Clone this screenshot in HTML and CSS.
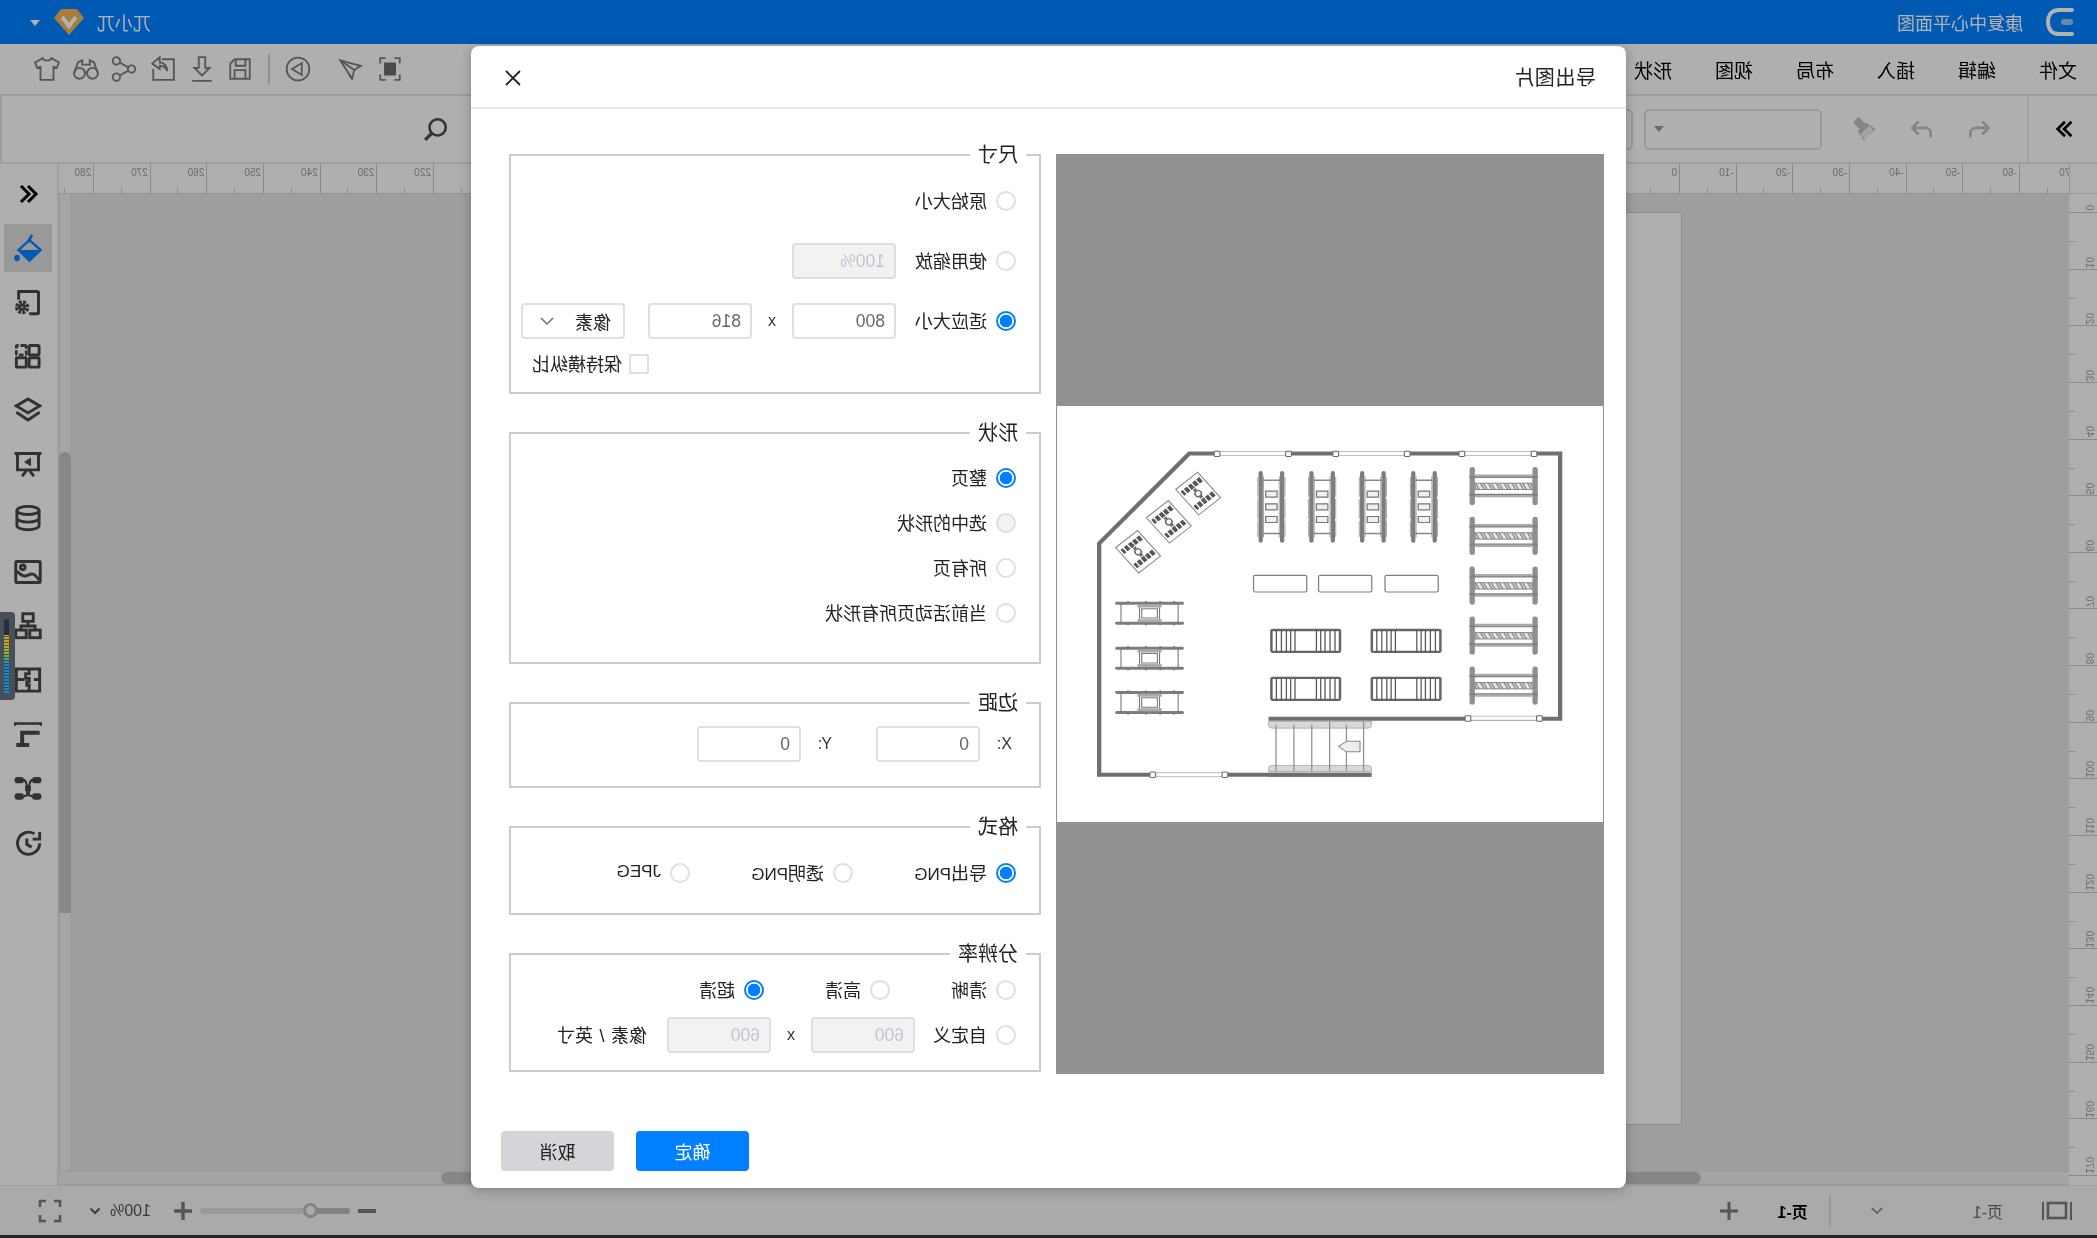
FILE: index.html
```html
<!DOCTYPE html>
<html lang="zh-CN">
<head>
<meta charset="utf-8">
<title>导出图片</title>
<link rel="stylesheet" href="styles.css">
</head>
<body>
<div class="app">
  <header class="topbar">
    <svg class="logo" viewBox="0 0 32 32"><path d="M5 4H18C27 4 29 11 29 16S27 28 18 28H5" fill="none" stroke="#fff" stroke-width="4" stroke-linecap="round"/><rect x="4" y="13" width="12" height="6" rx="3" fill="#9cc4ee"/></svg>
    <span class="doc-title">康复中心平面图</span>
    <span class="user">兀小兀</span>
    <svg class="badge" viewBox="0 0 30 28"><path d="M7 1H23L30 10 15 27 0 10Z" fill="#efb452"/><path d="M8 9L15 18 22 9" fill="none" stroke="#fff" stroke-width="4"/></svg>
    <span class="user-caret"></span>
  </header>

  <nav class="menubar">
    <span class="menu">文件</span><span class="menu">编辑</span><span class="menu">插入</span><span class="menu">布局</span><span class="menu">视图</span><span class="menu">形状</span>
    <div class="tools">
      <svg class="ti" viewBox="0 0 24 24"><path d="M3 7V2h5M16 2h5v5M21 17v5h-5M8 22H3v-5"/><rect class="solid" x="6.500" y="6" width="11" height="12"/></svg>
      <svg class="ti" viewBox="0 0 24 24"><path d="M22 4L3 9l6 4 2 8z"/><path d="M22 4L9 13M11 21l3-4"/></svg>
      <svg class="ti ti-play" viewBox="0 0 24 24"><circle cx="12" cy="12" r="10.500"/><path d="M8.500 6.500v11l9-5.500z"/></svg>
      <span class="tool-div"></span>
      <svg class="ti ti-save" viewBox="0 0 24 24"><path d="M3 3h14l4 4v14H3z"/><path d="M7 3v6h9V3M7 21v-8h10v8"/></svg>
      <svg class="ti" viewBox="0 0 24 24"><path d="M9 1h6v10h4l-7 7-7-7h4zM3 23h18"/></svg>
      <svg class="ti" viewBox="0 0 24 24"><path d="M13 3H2v19h19V12"/><path d="M15 1l7 6-7 5V9c-4 0-6 2-7 5 0-5 3-8 7-8z"/></svg>
      <svg class="ti" viewBox="0 0 24 24"><circle cx="5" cy="12" r="3.400"/><circle cx="19" cy="4.500" r="3.400"/><circle cx="19" cy="19.500" r="3.400"/><path d="M8 10.500l8-4.500M8 13.500l8 4.500"/></svg>
      <svg class="ti" viewBox="0 0 24 24"><circle cx="6" cy="16" r="5"/><circle cx="18" cy="16" r="5"/><path d="M10.500 15h3M1.500 15l3-9 4-2v5M22.500 15l-3-9-4-2v5M9 8h6"/></svg>
      <svg class="ti" viewBox="0 0 24 24"><path d="M8 2L1 6l2 5 3-1v12h12V10l3 1 2-5-7-4c-1 3-7 3-8 0z"/></svg>
    </div>
  </nav>

  <div class="toolbar">
    <div class="collapse"><svg class="ci" viewBox="0 0 24 24"><path d="M5 4l8 8-8 8M12 4l8 8-8 8"/></svg></div>
    <svg class="ti ti-undo" viewBox="0 0 24 24"><path d="M9 5L3 11l6 6M3 11h12c3 0 5 2 5 5v4"/></svg>
    <svg class="ti ti-redo" viewBox="0 0 24 24"><path d="M15 5l6 6-6 6M21 11H9c-3 0-5 2-5 5v4"/></svg>
    <svg class="ti ti-brush" viewBox="0 0 24 24"><path class="fillg" d="M17 1l5 5-5 5-1 1-5-5 1-1z"/><path class="fillg" d="M10 6l8 8-6 8.500L1.500 12z"/><path d="M7 10l7 7-3 3.500-6.500-7z" stroke="#f0f0f0" stroke-width="1.500" fill="#e6e6e6"/></svg>
    <div class="combo combo-a"><span class="caret"></span></div>
    <div class="combo combo-b"></div>
    <svg class="ti ti-search" viewBox="0 0 24 24"><circle cx="10.500" cy="10.500" r="7.500"/><path d="M16 16l6 6" stroke-width="3"/></svg>
  </div>

  <div class="work">
    <div class="stage">
      <div class="hruler">
        <div class="corner"></div>
        <div class="hticks">
          <span class="ht">-70</span><span class="ht">-60</span><span class="ht">-50</span><span class="ht">-40</span><span class="ht">-30</span><span class="ht">-20</span><span class="ht">-10</span><span class="ht">0</span><span class="ht">10</span><span class="ht">20</span><span class="ht">30</span><span class="ht">40</span><span class="ht">50</span><span class="ht">60</span><span class="ht">70</span><span class="ht">80</span><span class="ht">90</span><span class="ht">100</span><span class="ht">110</span><span class="ht">120</span><span class="ht">130</span><span class="ht">140</span><span class="ht">150</span><span class="ht">160</span><span class="ht">170</span><span class="ht">180</span><span class="ht">190</span><span class="ht">200</span><span class="ht">210</span><span class="ht">220</span><span class="ht">230</span><span class="ht">240</span><span class="ht">250</span><span class="ht">260</span><span class="ht">270</span><span class="ht">280</span>
        </div>
      </div>
      <div class="mid">
        <div class="vruler">
          <span class="vt"><b>0</b></span><span class="vt"><b>10</b></span><span class="vt"><b>20</b></span><span class="vt"><b>30</b></span><span class="vt"><b>40</b></span><span class="vt"><b>50</b></span><span class="vt"><b>60</b></span><span class="vt"><b>70</b></span><span class="vt"><b>80</b></span><span class="vt"><b>90</b></span><span class="vt"><b>100</b></span><span class="vt"><b>110</b></span><span class="vt"><b>120</b></span><span class="vt"><b>130</b></span><span class="vt"><b>140</b></span><span class="vt"><b>150</b></span><span class="vt"><b>160</b></span><span class="vt"><b>170</b></span>
        </div>
        <div class="canvas"><div class="paper"></div></div>
        <div class="vscroll"><div class="vthumb"></div></div>
      </div>
      <div class="hscroll"><div class="hthumb"></div></div>
    </div>
    <aside class="sidebar">
      <div class="si"><svg class="ci" viewBox="0 0 24 24"><path d="M19 4l-8 8 8 8M12 4l-8 8 8 8"/></svg></div>
      <div class="si si-on"><svg class="bucket" viewBox="0 0 28 28"><path d="M10 1l4 7" stroke-width="2.600"/><path d="M1.500 16L12.500 6l11 10-11 10.500z" stroke-width="2.400"/><path class="bfill" d="M1.500 16h22l-11 11z"/><ellipse class="bfill" cx="25" cy="24" rx="2.800" ry="3.200"/></svg></div>
      <div class="si"><svg viewBox="0 0 24 24"><path d="M20 10V3H4a1 1 0 0 0-1 1v17a1 1 0 0 0 1 1h7"/><circle cx="17" cy="16.500" r="2"/><circle cx="17" cy="16.500" r="4.500" stroke-dasharray="2.400 1.100" stroke-width="3.200"/></svg></div>
      <div class="si"><svg viewBox="0 0 24 24"><rect x="2.500" y="3" width="8.500" height="8" rx="1"/><rect x="13.500" y="3" width="8.500" height="8" rx="1" stroke-dasharray="4 1.500"/><rect x="2.500" y="13.500" width="8.500" height="8" rx="1"/><rect x="13.500" y="13.500" width="8.500" height="8" rx="1"/></svg></div>
      <div class="si"><svg viewBox="0 0 24 24"><path d="M12 2.500l10 6-10 6-10-6z"/><path d="M2 14l10 6.500L22 14"/></svg></div>
      <div class="si"><svg viewBox="0 0 24 24"><path d="M0.500 3h23M3 3v14h18V3M7 22.500l4-5.500M17 22.500l-4-5.500"/><path class="fill" d="M9.500 6.500v7.500l6-3.750z"/></svg></div>
      <div class="si"><svg viewBox="0 0 24 24"><ellipse cx="12" cy="5.500" rx="9.500" ry="3.500"/><path d="M2.500 5.500v13c0 2 4 3.500 9.500 3.500s9.500-1.500 9.500-3.500v-13M2.500 12c0 2 4 3.500 9.500 3.500s9.500-1.500 9.500-3.500"/></svg></div>
      <div class="si"><svg viewBox="0 0 24 24"><rect x="1.500" y="3" width="21" height="18" rx="1"/><circle cx="16.500" cy="8" r="2"/><path d="M2.500 19c4-6 6-6 9-4.500s5 1.500 10-3"/></svg></div>
      <div class="si"><svg viewBox="0 0 24 24"><rect x="7.500" y="1.500" width="9" height="6.500"/><rect x="1.500" y="15.500" width="9" height="6.500"/><rect x="13.500" y="15.500" width="9" height="6.500"/><path d="M12 8v4M6 15.500V12h12v3.500"/></svg></div>
      <div class="si"><svg viewBox="0 0 24 24"><path d="M2 2.500h20v19H2z"/><path d="M2 11.500h5M15 11.500h7M11 2.500v4h3v4h-3v3h2v3h-2v5"/></svg></div>
      <div class="si"><svg viewBox="0 0 24 24"><path d="M1 5V3h22v2" stroke-width="2"/><path d="M2 11H17V21M11 21.500H22" stroke-width="3.400"/></svg></div>
      <div class="si"><svg viewBox="0 0 24 24"><rect class="fill" x="0.500" y="2.500" width="8" height="5.500" rx="2.500"/><rect class="fill" x="15.500" y="2.500" width="8" height="5.500" rx="2.500"/><rect class="fill" x="0.500" y="16.500" width="8" height="5.500" rx="2.500"/><rect class="fill" x="15.500" y="16.500" width="8" height="5.500" rx="2.500"/><path d="M8 5c3 0 2 4 4 7s1 7-4 7M16 5c-3 0-2 4-4 7s-1 7 4 7" stroke-width="1.800"/><rect class="fill" x="9.500" y="10" width="5" height="4.500"/></svg></div>
      <div class="si"><svg viewBox="0 0 24 24"><path d="M6.500 5a9.500 9.500 0 1 1-4.500 8"/><path d="M2 3.500v6h6"/><path d="M13 9v5l-4 2.500"/></svg></div>
    </aside>
  </div>

  <footer class="status">
    <svg class="st st-view" viewBox="0 0 32 20"><path d="M2 1v18M30 1v18"/><rect x="7" y="2" width="18" height="15" stroke-width="2.600"/></svg>
    <span class="page-name">页-1</span>
    <svg class="st st-chev" viewBox="0 0 16 10"><path d="M2 2l6 6 6-6"/></svg>
    <span class="st-div"></span>
    <span class="page-tab">页-1</span>
    <svg class="st st-plus" viewBox="0 0 18 18"><path d="M9 0v18M0 9h18"/></svg>
    <svg class="st st-minus" viewBox="0 0 18 4"><path d="M0 2h18"/></svg>
    <div class="slider"><span class="slider-fill"></span><span class="slider-knob"></span></div>
    <svg class="st st-plus2" viewBox="0 0 18 18"><path d="M9 0v18M0 9h18"/></svg>
    <span class="zoom-val">100%</span>
    <svg class="st st-chev2" viewBox="0 0 12 8"><path d="M1.500 1.500l4.500 4.500 4.500-4.500"/></svg>
    <svg class="st st-full" viewBox="0 0 24 24"><path d="M2 8V2h6M16 2h6v6M22 16v6h-6M8 22H2v-6"/></svg>
  </footer>
  <div class="bottom-edge"></div>

  <div class="mask"></div>
  <div class="meter"><div class="meter-bars"></div></div>

  <section class="modal">
    <div class="modal-head">
      <h2 class="modal-title">导出图片</h2>
      <svg class="close" viewBox="0 0 16 16"><path d="M1 1l14 14M15 1L1 15"/></svg>
    </div>
    <div class="modal-body">
      <div class="preview">
        <svg class="plan" viewBox="20 17 1528 1250" preserveAspectRatio="none">
          <defs>
            <pattern id="hatch" width="22" height="18" patternUnits="userSpaceOnUse" patternTransform="skewX(30)"><rect width="22" height="18" fill="#e8e8e8"/><path d="M6 0v18M14 0v18" stroke="#555" stroke-width="3"/></pattern>
            <g id="rackA">
              <path d="M-30 -102V102M30 -102V102" stroke="#7d7d7d" stroke-width="12" stroke-linecap="round"/>
              <path d="M-38 -90V90M38 -90V90" stroke="#aaa" stroke-width="3" stroke-dasharray="60 6"/>
              <path d="M-22 -92V92M22 -92V92" stroke="#999" stroke-width="2.500"/>
              <path d="M-30 -80H30M-30 80H30" stroke="#888" stroke-width="4"/>
              <path d="M-16 -47H16V-29H-16ZM-16 -9H16V9H-16ZM-16 29H16V47H-16Z" fill="#f0f0f0" stroke="#777" stroke-width="3.500"/>
            </g>
            <g id="rackB">
              <path d="M-88 -50V50M88 -50V50" stroke="#8f8f8f" stroke-width="15" stroke-linecap="round"/>
              <path d="M-96 -28H96M-96 26H96" stroke="#808080" stroke-width="6"/>
              <path d="M-80 -32H80M-80 30H80" stroke="#aaa" stroke-width="7"/>
              <rect x="-80" y="-9" width="162" height="19" fill="url(#hatch)" stroke="#888" stroke-width="3"/>
            </g>
            <g id="rackC">
              <rect x="-96" y="-33" width="192" height="66" rx="4" fill="#fff" stroke="#666" stroke-width="7"/>
              <path d="M-82 -33V33M-68 -33V33M-54 -33V33M-42 -33V33M-30 -33V33M30 -33V33M42 -33V33M54 -33V33M68 -33V33M82 -33V33" stroke="#555" stroke-width="3.500"/>
            </g>
            <g id="rackD">
              <path d="M-92 -30H92M-92 30H92" stroke="#7d7d7d" stroke-width="9" stroke-linecap="round"/>
              <path d="M-80 -30V30M-28 -30V30M28 -30V30M80 -30V30" stroke="#777" stroke-width="3"/>
              <path d="M-22 -14H22V14H-22Z" fill="#fff" stroke="#777" stroke-width="3"/>
              <path d="M-34 -22H34M-34 22H34" stroke="#aaa" stroke-width="9"/>
              <path d="M-60 -30V-36M-10 -30V-36M30 -30V-36M68 -30V-36M-60 30V36M-10 30V36M30 30V36M68 30V36" stroke="#777" stroke-width="6"/>
            </g>
            <g id="rackE">
              <rect x="-50" y="-40" width="100" height="80" fill="#fff" stroke="#888" stroke-width="3"/>
              <path d="M-28 -34V34M28 -34V34" stroke="#555" stroke-width="16" stroke-dasharray="11 4"/>
              <path d="M-26 0H26" stroke="#666" stroke-width="10" stroke-dasharray="6 3"/>
              <circle r="9" fill="#fff" stroke="#666" stroke-width="4"/>
            </g>
          </defs>
          <rect x="20" y="17" width="1528" height="1250" fill="#fff"/>
          <path d="M900 1125H138V430L390 160H1428V957H612" fill="none" stroke="#6f6f6f" stroke-width="12"/>
          <g fill="#fff" stroke="#bbb" stroke-width="2.500">
            <rect x="468" y="154" width="200" height="12"/><rect x="800" y="154" width="200" height="12"/><rect x="1153" y="154" width="202" height="12"/><rect x="1170" y="949" width="200" height="12"/><rect x="288" y="1119" width="202" height="12"/>
          </g>
          <g fill="#fff" stroke="#666" stroke-width="3">
            <rect x="460" y="153" width="16" height="16" rx="3"/><rect x="660" y="153" width="16" height="16" rx="3"/><rect x="792" y="153" width="16" height="16" rx="3"/><rect x="992" y="153" width="16" height="16" rx="3"/><rect x="1145" y="153" width="16" height="16" rx="3"/><rect x="1347" y="153" width="16" height="16" rx="3"/><rect x="1162" y="948" width="16" height="16" rx="3"/><rect x="1362" y="948" width="16" height="16" rx="3"/><rect x="280" y="1117" width="16" height="16" rx="3"/><rect x="482" y="1117" width="16" height="16" rx="3"/>
          </g>
          <use href="#rackA" x="620" y="320"/><use href="#rackA" x="762" y="320"/><use href="#rackA" x="904" y="320"/><use href="#rackA" x="1047" y="320"/>
          <use href="#rackB" x="1270" y="258"/><use href="#rackB" x="1270" y="407"/><use href="#rackB" x="1270" y="557"/><use href="#rackB" x="1270" y="707"/><use href="#rackB" x="1270" y="857"/>
          <g fill="#fff" stroke="#7f7f7f" stroke-width="3.500"><rect x="570" y="526" width="149" height="50" rx="5"/><rect x="752" y="526" width="149" height="50" rx="5"/><rect x="938" y="526" width="149" height="50" rx="5"/></g>
          <use href="#rackC" x="716" y="723"/><use href="#rackC" x="997" y="723"/><use href="#rackC" x="716" y="867"/><use href="#rackC" x="997" y="867"/>
          <use href="#rackD" x="279" y="640"/><use href="#rackD" x="279" y="775"/><use href="#rackD" x="279" y="908"/>
          <g transform="translate(415 280) rotate(50)"><use href="#rackE"/></g><g transform="translate(333 365) rotate(50)"><use href="#rackE"/></g><g transform="translate(247 455) rotate(50)"><use href="#rackE"/></g>
          <path d="M612 965H900V975Q900 985 890 985H622Q612 985 612 975ZM612 1115H900V1107Q900 1097 890 1097H622Q612 1097 612 1107Z" fill="#d8d8d8" stroke="#999" stroke-width="2"/>
          <path d="M633 975V1115M683 975V1115M733 975V1115M783 965V1115M830 975V1115M878 965V1115" stroke="#8f8f8f" stroke-width="3.500"/>
          <path d="M808 1040L830 1024H868V1056H830Z" fill="#eee" stroke="#888" stroke-width="3"/>
          <path d="M612 1125H900" stroke="#6f6f6f" stroke-width="12"/>
        </svg>
      </div>
      <form class="form">
        <fieldset class="fs fs-size">
          <legend>尺寸</legend>
          <div class="rows rows-size">
            <div class="row r60"><span class="radio"></span><span class="lbl">原始大小</span></div>
            <div class="row r60"><span class="radio"></span><span class="lbl lbl-gap">使用缩放</span><span class="inp off">100%</span></div>
            <div class="row r60"><span class="radio on"></span><span class="lbl lbl-gap">适应大小</span><span class="inp">800</span><span class="sep">x</span><span class="inp">816</span><span class="sel"><span>像素</span><svg class="chev" viewBox="0 0 14 8"><path d="M1 1l6 6 6-6"/></svg></span></div>
            <div class="row rcheck"><span class="check"></span><span class="check-lbl">保持横纵比</span></div>
          </div>
        </fieldset>
        <fieldset class="fs fs-shape">
          <legend>形状</legend>
          <div class="rows rows-shape">
            <div class="row r45"><span class="radio on"></span><span class="lbl">整页</span></div>
            <div class="row r45"><span class="radio dis"></span><span class="lbl">选中的形状</span></div>
            <div class="row r45"><span class="radio"></span><span class="lbl">所有页</span></div>
            <div class="row r45"><span class="radio"></span><span class="lbl">当前活动页所有形状</span></div>
          </div>
        </fieldset>
        <fieldset class="fs fs-margin">
          <legend>边距</legend>
          <div class="rows rows-margin">
            <div class="row r36"><span class="axis axis-x">X:</span><span class="inp">0</span><span class="axis axis-y">Y:</span><span class="inp">0</span></div>
          </div>
        </fieldset>
        <fieldset class="fs fs-format">
          <legend>格式</legend>
          <div class="rows rows-format">
            <div class="row r36">
              <span class="opt opt-f"><span class="radio on"></span><span class="lbl">导出<span class="lat">PNG</span></span></span>
              <span class="opt opt-f"><span class="radio"></span><span class="lbl">透明<span class="lat">PNG</span></span></span>
              <span class="opt opt-f"><span class="radio"></span><span class="lbl lat">JPEG</span></span>
            </div>
          </div>
        </fieldset>
        <fieldset class="fs fs-res">
          <legend>分辨率</legend>
          <div class="rows rows-res">
            <div class="row r45">
              <span class="opt opt-r"><span class="radio"></span><span class="lbl">清晰</span></span>
              <span class="opt opt-r"><span class="radio"></span><span class="lbl">高清</span></span>
              <span class="opt opt-r"><span class="radio on"></span><span class="lbl">超清</span></span>
            </div>
            <div class="row r45"><span class="radio"></span><span class="lbl lbl-72">自定义</span><span class="inp off">600</span><span class="sep">x</span><span class="inp off">600</span><span class="unit">像素 / 英寸</span></div>
          </div>
        </fieldset>
      </form>
    </div>
    <div class="modal-foot">
      <button class="btn btn-ok" type="button">确定</button>
      <button class="btn btn-no" type="button">取消</button>
    </div>
  </section>
</div>
</body>
</html>
```
FILE: styles.css
```css
* { box-sizing: border-box; }
html, body { margin: 0; padding: 0; height: 100%; overflow: hidden; background: #000; }
body { font-family: "Liberation Sans", "Noto Sans CJK SC", sans-serif; }

/* The whole screen is a mirror image of the product UI */
.app {
  position: relative;
  width: 2097px;
  height: 1238px;
  display: flex;
  flex-direction: column;
  overflow: hidden;
  background: #fbfbfb;
  color: #000;
  transform: scaleX(-1);
}

.topbar {
  flex: 0 0 44px;
  display: flex;
  align-items: center;
  background: #0080ff;
  color: #fff;
  font-size: 18px;
  padding-left: 20px;
}
.logo { width: 32px; height: 32px; flex: none; }
.doc-title { margin-left: 22px; }
.user { margin-left: auto; }
.badge { width: 30px; height: 28px; margin-left: 13px; flex: none; }
.user-caret { margin: 2px 30px 0 14px; border: 5px solid transparent; border-top: 6px solid #fff; border-bottom: 0; width: 0; }

.menubar {
  flex: 0 0 52px;
  display: flex;
  align-items: center;
  border-bottom: 2px solid #e2e2e2;
  padding-left: 20px;
  font-size: 19px;
}
.menu { width: 38px; margin-right: 43px; white-space: nowrap; }
.tools { margin-left: auto; display: flex; align-items: center; padding-right: 28px; }
.ti { width: 26px; height: 26px; flex: none; fill: none; stroke: #7c7c7c; stroke-width: 1.700; margin: 0 6.300px; }
.ti .solid { fill: #6a6a6a; stroke: none; }
.ti-play { margin-left: 20.700px; margin-right: 5px; }
.ti-save { margin-left: 5px; }
.tool-div { width: 2px; height: 30px; background: #cfcfcf; margin: 0 10px; }

.toolbar {
  flex: 0 0 68px;
  display: flex;
  align-items: center;
  border-bottom: 2px solid #e2e2e2;
  border-right: 2px solid #e2e2e2;
}
.collapse { width: 70px; height: 100%; display: flex; align-items: center; justify-content: center; border-right: 2px solid #e8e8e8; padding-right: 4px; }
.ci { width: 22px; height: 22px; fill: none; stroke: #000; stroke-width: 3; }
.ti-undo, .ti-redo, .ti-brush { stroke: #bdbdbd; stroke-width: 2.400; }
.ti-undo { margin-left: 35px; }
.ti-redo { margin-left: 24.700px; }
.ti-brush { margin-left: 25.700px; }
.fillg { fill: #bdbdbd; stroke: none; }
.combo { height: 41px; border: 2px solid #dcdcdc; border-radius: 5px; display: flex; align-items: center; justify-content: flex-end; flex: none; }
.combo-a { width: 178px; margin-left: 22.700px; padding-right: 8px; }
.combo-b { width: 240px; margin-left: 11px; }
.caret { border: 5px solid transparent; border-top: 6px solid #999; border-bottom: 0; width: 0; }
.ti-search { margin-left: auto; margin-right: 421px; stroke: #4a4a4a; stroke-width: 2.400; }

.work { flex: 1; display: flex; min-height: 0; }
.stage { flex: 1; display: flex; flex-direction: column; min-width: 0; }

.hruler { flex: 0 0 29px; display: flex; border-bottom: 1px solid #d6d6d6; }
.corner { flex: 0 0 28px; border-right: 1px solid #cfcfcf; }
.hticks { flex: 1; display: flex; overflow: hidden; }
.ht {
  position: relative;
  flex: 0 0 56.650px;
  height: 29px;
  border-left: 1px solid #c4c4c4;
  font-size: 10px;
  line-height: 12px;
  padding: 3px 0 0 2px;
  color: #999;
}
.ht:first-child { margin-left: -7.550px; }
.ht::after { content: ""; position: absolute; left: 28px; bottom: 0; height: 5px; width: 1px; background: #c4c4c4; }

.mid { flex: 1; display: flex; min-height: 0; }
.vruler { flex: 0 0 28px; overflow: hidden; margin-bottom: -14px; }
.vt {
  position: relative;
  display: block;
  height: 56.650px;
  border-bottom: 1px solid #c4c4c4;
}
.vt:first-child { margin-top: -37.650px; }
.vt b {
  position: absolute;
  left: 2px;
  bottom: 1px;
  writing-mode: vertical-rl;
  transform: rotate(180deg);
  font-size: 10px;
  line-height: 12px;
  font-weight: 400;
  color: #999;
}
.vt::after { content: ""; position: absolute; right: 0; top: 28px; width: 6px; height: 1px; background: #c4c4c4; }

.canvas { flex: 1; background: #e3e3e3; padding: 18px 0 0 387px; min-width: 0; overflow: hidden; }
.paper { width: 1100px; height: 913px; background: #fbfbfb; border: 1px solid #c6c6c6; }

.vscroll { flex: 0 0 12px; background: #ececec; border-left: 1px solid #dcdcdc; border-right: 1px solid #dcdcdc; padding-top: 258px; }
.vthumb { height: 461px; background: #c2c2c2; border-radius: 6px 6px 0 0; margin: 0 -1px; }
.hscroll { flex: 0 0 14px; background: #ececec; border-top: 1px solid #dcdcdc; border-bottom: 1px solid #dcdcdc; padding-left: 396px; margin-left: 28px; }
.hthumb { width: 1260px; height: 12px; background: #c2c2c2; border-radius: 6px; margin-left: -28px; }

.sidebar { flex: 0 0 59px; display: flex; flex-direction: column; align-items: center; border-left: 2px solid #e4e4e4; padding-top: 3px; }
.si { flex: 0 0 54px; width: 48px; display: flex; align-items: center; justify-content: center; }
.si svg { width: 28px; height: 28px; fill: none; stroke: #474747; stroke-width: 2.500; }
.si svg.ci { width: 24px; height: 24px; stroke: #000; stroke-width: 3; }
.si-on { background: #dcdcdc; height: 48px; flex-basis: 48px; margin: 3px 0; }
.si svg.bucket { stroke: #0080ff; width: 28px; height: 28px; overflow: visible; }
.si svg .bfill { fill: #0080ff; stroke: none; }
.si svg .fill { fill: #474747; stroke: none; }

.status {
  flex: 0 0 50px;
  display: flex;
  align-items: center;
  background: #f4f4f4;
  border-top: 1px solid #e4e4e4;
  font-size: 16px;
  color: #666;
}
.st { flex: none; fill: none; stroke: #7a7a7a; stroke-width: 2; }
.st-view { width: 32px; height: 20px; margin-left: 24px; }
.page-name { margin-left: 38px; color: #6a6a6a; }
.st-chev { width: 14px; height: 9px; margin-left: 89px; stroke: #8a8a95; }
.st-div { width: 2px; height: 30px; background: #d8d8d8; margin-left: 39px; }
.page-tab { margin-left: 21px; color: #000; font-weight: 700; }
.st-plus { width: 18px; height: 18px; margin-left: 40px; stroke-width: 3; }
.st-minus { width: 18px; height: 4px; margin-left: auto; stroke-width: 4; }
.slider { position: relative; width: 150px; height: 6px; margin-left: 8px; background: #dcdcdc; border-radius: 3px; flex: none; }
.slider-fill { display: block; width: 39px; height: 6px; background: #bcbcbc; border-radius: 3px; }
.slider-knob { position: absolute; left: 32px; top: -5px; width: 15px; height: 15px; border: 3px solid #bcbcbc; background: #f4f4f4; border-radius: 50%; }
.st-plus2 { width: 18px; height: 18px; margin-left: 8px; stroke-width: 3.500; }
.zoom-val { margin-left: 23px; color: #555; }
.st-chev2 { width: 12px; height: 8px; margin-left: 9px; stroke: #555; }
.st-full { width: 24px; height: 24px; margin: 0 38px 0 27px; stroke-width: 2.600; }

.bottom-edge { flex: 0 0 3px; background: #333; }

.mask { position: absolute; inset: 0; background: rgba(0, 0, 0, .3); }

.meter {
  position: absolute;
  right: 0;
  top: 612px;
  width: 15px;
  height: 88px;
  background: #475059;
  border-radius: 4px 0 0 4px;
  padding: 7px 4px 7px 6px;
}
.meter-bars {
  height: 100%;
  background:
    repeating-linear-gradient(to bottom, transparent 0 2px, rgba(30, 40, 50, .6) 2px 3px),
    linear-gradient(to bottom, #2a2f3f 0 21%, #caa01f 21% 34%, #9fae32 45%, #3f9f86 56%, #1c86c4 62%, #1e88c8 100%);
}

.modal {
  position: absolute;
  left: 471px;
  top: 46px;
  width: 1155px;
  height: 1142px;
  background: #fff;
  border-radius: 8px;
  box-shadow: 0 2px 12px rgba(0, 0, 0, .25);
  display: flex;
  flex-direction: column;
}
.modal-head { flex: 0 0 63px; display: flex; align-items: center; justify-content: space-between; border-bottom: 2px solid #e6e6e6; padding: 2px 34px 0 30px; }
.modal-title { margin: 0; font-size: 20px; letter-spacing: .6px; font-weight: 400; line-height: 1; color: #222; }
.close { width: 16px; height: 16px; fill: none; stroke: #222; stroke-width: 1.800; }
.modal-body { display: flex; align-items: flex-start; padding: 34px 38px 0 22px; gap: 15px; }
.preview { width: 548px; height: 920px; margin-top: 11px; background: #919191; display: flex; align-items: center; justify-content: center; flex: none; }
.plan { width: 546px; height: 416px; transform: scaleX(-1); filter: blur(.45px); display: block; }

.form { width: 532px; flex: none; display: flex; flex-direction: column; gap: 27px; }
.fs { margin: 0; padding: 0; border: 2px solid #ccc; min-width: 0; width: 532px; }
.fs legend { margin-left: 13px; padding: 0 8px; font-size: 20px; line-height: 24px; color: #222; }
.fs-size { height: 251px; }
.fs-shape { height: 243px; }
.fs-margin { height: 97px; }
.fs-format { height: 100px; }
.fs-res { height: 130px; }
.rows { padding-left: 23px; }
.rows-size { padding-top: 4px; }
.rows-shape { padding-top: 10px; }
.rows-margin { padding-top: 11px; }
.rows-format { padding-top: 16px; }
.rows-res { padding-top: 1px; }
.row { display: flex; align-items: center; font-size: 18px; color: #222; white-space: nowrap; }
.r60 { height: 60px; }
.r45 { height: 45px; }
.r36 { height: 36px; }
.rcheck { height: 26px; padding-left: 367px; }
.radio { flex: none; width: 20px; height: 20px; border-radius: 50%; border: 2px solid #dcdfe6; background: #fff; }
.radio.dis { background: #f2f2f3; }
.radio.on { border-color: #0080ff; background: radial-gradient(circle, #0080ff 0 6px, #fff 6.600px); }
.lbl { margin: 0 0 2px 9px; }
.lat { font-size: 17px; }
.lbl-gap { width: 72px; margin-right: 19px; flex: none; }
.lbl-72 { width: 72px; flex: none; }
.inp { flex: none; width: 104px; height: 36px; border: 2px solid #dcdfe6; border-radius: 4px; padding-left: 9px; font-size: 17.500px; line-height: 33px; color: #666; background: #fff; }
.inp.off { background: #f2f2f3; color: #c0c4cc; }
.sep { flex: none; width: 40px; text-align: center; font-size: 16px; color: #333; }
.sel { flex: none; width: 104px; height: 36px; margin-left: 23px; border: 2px solid #dcdfe6; border-radius: 4px; padding: 0 17px 0 12px; display: flex; align-items: center; justify-content: space-between; color: #222; }
.chev { width: 14px; height: 8px; fill: none; stroke: #6b7280; stroke-width: 1.500; }
.check { flex: none; width: 20px; height: 20px; border: 2px solid #dcdfe6; border-radius: 2px; }
.check-lbl { margin: 0 0 2px 7px; }
.axis { flex: none; font-size: 16px; color: #333; }
.axis-x { width: 36px; padding-left: 4px; }
.axis-y { width: 31px; margin-left: 44px; }
.opt { flex: none; display: flex; align-items: center; }
.opt-f { width: 163px; }
.opt-r { width: 126px; }
.unit { margin: 0 0 2px 20px; word-spacing: 1.500px; }

.modal-foot { margin-top: auto; display: flex; justify-content: flex-end; gap: 22px; padding: 0 30px 17px 0; }
.btn { width: 113px; height: 40px; border: 0; border-radius: 4px; font: inherit; font-size: 18px; }
.btn-ok { background: #0080ff; color: #fff; }
.btn-no { background: #d4d5d8; color: #222; }
```
